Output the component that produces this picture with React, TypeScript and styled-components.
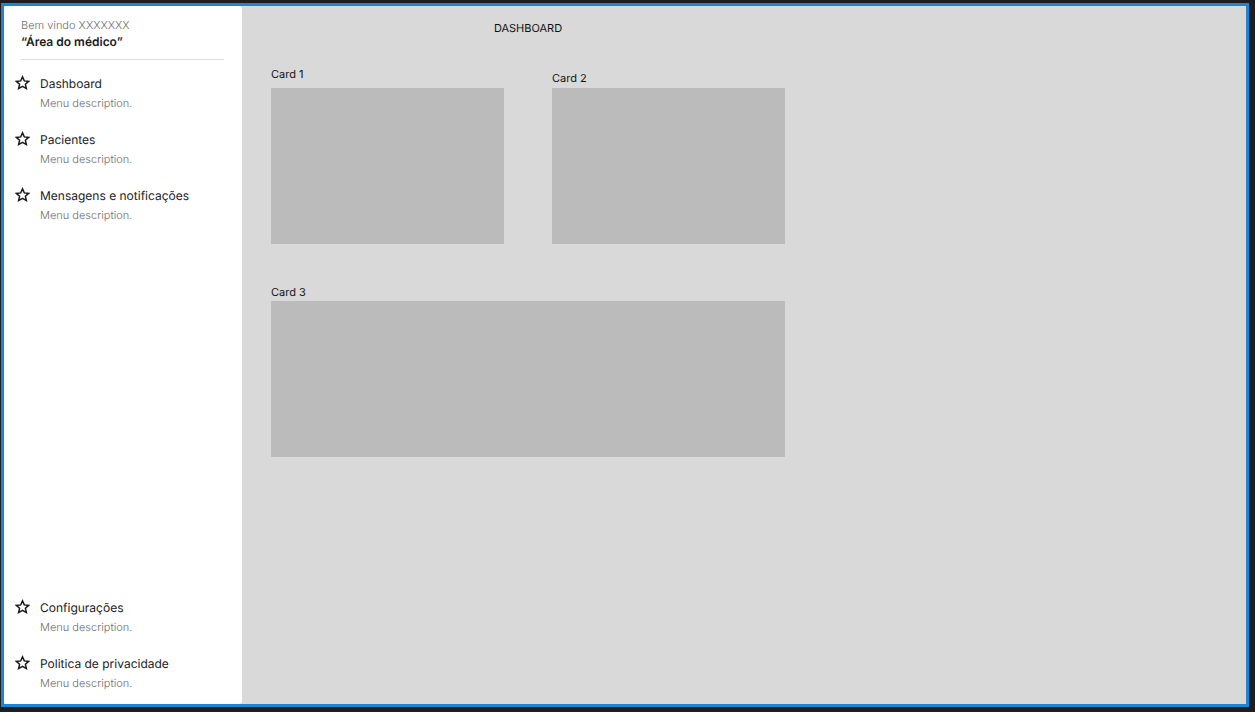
import React from "react";
import styled, { createGlobalStyle } from "styled-components";

const GlobalStyle = createGlobalStyle`
  *, *::before, *::after { box-sizing: border-box; }
  body {
    margin: 0;
    background: #1c1e21;
    font-family: Inter, "Liberation Sans", sans-serif;
    text-rendering: geometricPrecision;
  }
`;

const Page = styled.div`
  display: flex;
  min-height: 100vh;
  padding: 3px 6px 5px 1px;
`;

const Frame = styled.div`
  flex: 1;
  display: flex;
  border: 3px solid #1f85d3;
  background: #d9d9d9;
`;

const Sidebar = styled.aside`
  flex: 0 0 238px;
  display: flex;
  flex-direction: column;
  padding: 11px 11px 13px;
  background: #ffffff;
  border-radius: 3px;
`;

const Welcome = styled.header`
  margin: 0 7px 15px 6px;
  padding-bottom: 9px;
  border-bottom: 1px solid #e0e0e0;
`;

const Greeting = styled.p`
  margin: 0;
  font-size: 11px;
  font-weight: 300;
  line-height: 16px;
  color: #6e6e6e;
`;

const Area = styled.h2`
  margin: 0;
  font-size: 12px;
  font-weight: 600;
  line-height: 17px;
  color: #1c1c1c;
`;

const Nav = styled.nav`
  flex: 1;
  display: flex;
  flex-direction: column;
  justify-content: space-between;
  gap: 20px;
`;

const Menu = styled.ul`
  display: flex;
  flex-direction: column;
  gap: 20px;
  margin: 0;
  padding: 0;
  list-style: none;
`;

const MenuLink = styled.a`
  display: flex;
  gap: 10px;
  color: #222222;
  text-decoration: none;
`;

const StarIcon = styled.svg`
  flex: none;
  width: 15px;
  height: 16px;
  fill: none;
  stroke: #1a1a1a;
  stroke-width: 1.5;
`;

const MenuText = styled.span`
  display: flex;
  flex-direction: column;
  gap: 2px;
`;

const MenuTitle = styled.span`
  font-size: 12px;
  line-height: 18px;
`;

const MenuDescription = styled.span`
  font-size: 11px;
  font-weight: 300;
  line-height: 16px;
  color: #6e6e6e;
`;

const Main = styled.main`
  flex: 1;
  min-width: 0;
  padding: 14px 29px;
`;

const Board = styled.div`
  max-width: 514px;
`;

const Title = styled.h1`
  margin: 0 0 30px;
  font-size: 11px;
  font-weight: 400;
  line-height: 16px;
  text-align: center;
  color: #111111;
`;

const Cards = styled.div`
  display: grid;
  grid-template-columns: 1fr 1fr;
  align-items: end;
  gap: 40px 48px;
`;

const Card = styled.section<{ $wide?: boolean; $gap: number }>`
  display: flex;
  flex-direction: column;
  gap: ${({ $gap }) => $gap}px;
  grid-column: ${({ $wide }) => ($wide ? "1 / -1" : "auto")};
`;

const CardLabel = styled.h3`
  margin: 0;
  font-size: 11px;
  font-weight: 400;
  line-height: 16px;
  color: #111111;
`;

const CardBody = styled.div`
  height: 156px;
  background: #bbbbbb;
`;

const mainMenu = ["Dashboard", "Pacientes", "Mensagens e notificações"];
const footerMenu = ["Configurações", "Politica de privacidade"];

function MenuList({ items }: { items: string[] }) {
  return (
    <Menu>
      {items.map((title) => (
        <li key={title}>
          <MenuLink href="#">
            <StarIcon viewBox="0 0 15 16" aria-hidden="true">
              <path d="M7.5 1.9 9.3 5.9 13.7 6.4 10.4 9.3 11.4 13.6 7.5 11.4 3.6 13.6 4.6 9.3 1.3 6.4 5.7 5.9Z" />
            </StarIcon>
            <MenuText>
              <MenuTitle>{title}</MenuTitle>
              <MenuDescription>Menu description.</MenuDescription>
            </MenuText>
          </MenuLink>
        </li>
      ))}
    </Menu>
  );
}

export default function App() {
  return (
    <>
      <GlobalStyle />
      <Page>
        <Frame>
          <Sidebar>
            <Welcome>
              <Greeting>Bem vindo XXXXXXX</Greeting>
              <Area>“Área do médico”</Area>
            </Welcome>
            <Nav>
              <MenuList items={mainMenu} />
              <MenuList items={footerMenu} />
            </Nav>
          </Sidebar>
          <Main>
            <Board>
              <Title>DASHBOARD</Title>
              <Cards>
                <Card $gap={6}>
                  <CardLabel>Card 1</CardLabel>
                  <CardBody />
                </Card>
                <Card $gap={2}>
                  <CardLabel>Card 2</CardLabel>
                  <CardBody />
                </Card>
                <Card $wide $gap={1}>
                  <CardLabel>Card 3</CardLabel>
                  <CardBody />
                </Card>
              </Cards>
            </Board>
          </Main>
        </Frame>
      </Page>
    </>
  );
}
